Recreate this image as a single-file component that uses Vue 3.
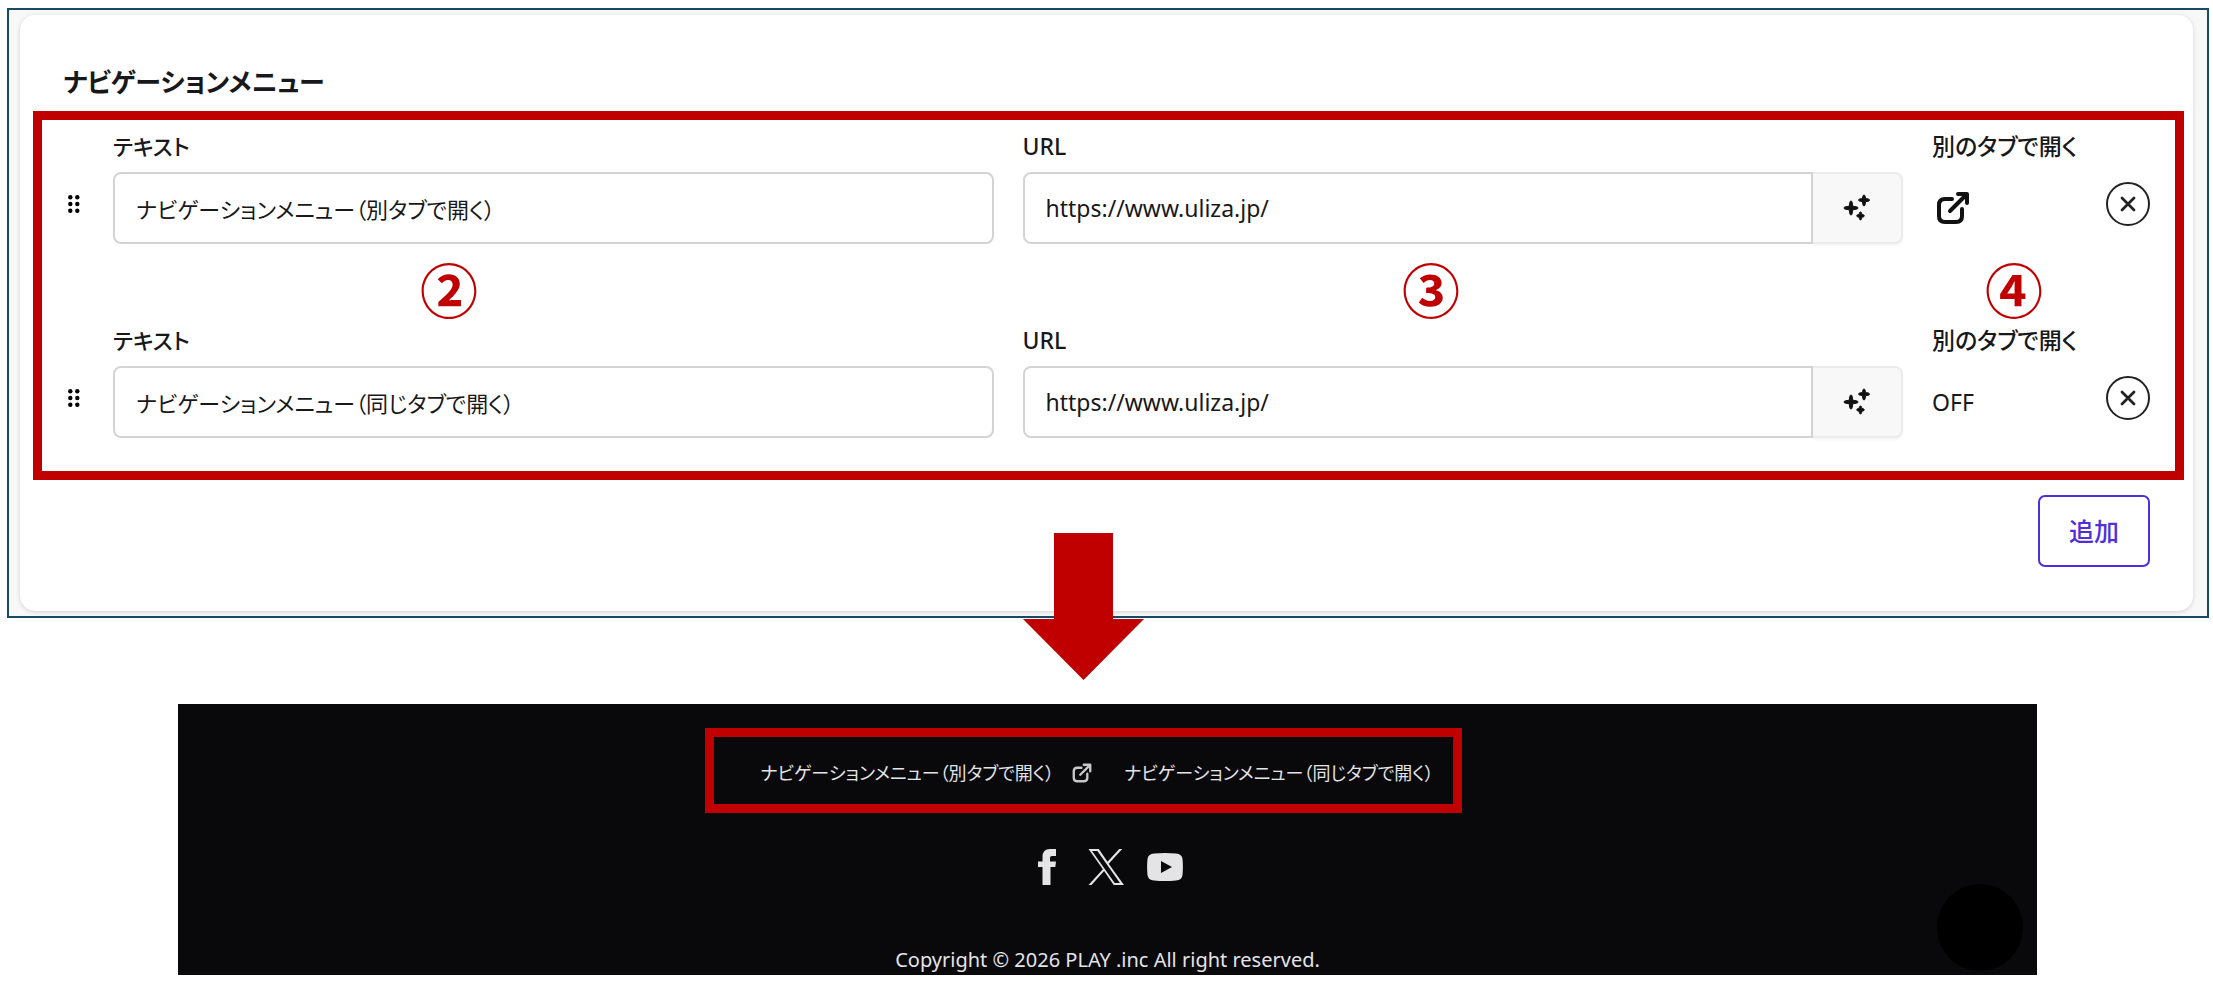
<script setup>
import { reactive } from 'vue'

const rows = reactive([
  { text: 'ナビゲーションメニュー（別タブで開く）', url: 'https://www.uliza.jp/', newTab: true },
  { text: 'ナビゲーションメニュー（同じタブで開く）', url: 'https://www.uliza.jp/', newTab: false },
])
</script>

<template>
  <main class="page">
    <div class="frame">
      <section class="card">
        <h2 class="title">ナビゲーションメニュー</h2>
        <div class="highlight rows">
          <div v-for="(row, i) in rows" :key="i" class="row">
            <svg class="handle" viewBox="0 0 12 18" aria-hidden="true">
              <circle v-for="n in 6" :key="n" :cx="n % 2 ? 2.3 : 9.300" :cy="2.300 + Math.floor((n - 1) / 2) * 6.700" r="2.200" />
            </svg>
            <div class="field">
              <label :for="'text' + i">テキスト</label>
              <input :id="'text' + i" v-model="row.text" class="input" type="text" />
            </div>
            <div class="field">
              <label :for="'url' + i" class="latin">URL</label>
              <div class="group">
                <input :id="'url' + i" v-model="row.url" class="input latin" type="text" />
                <button class="spark" type="button" aria-label="URL">
                  <svg viewBox="0 0 26 26" aria-hidden="true">
                    <path d="M7 6q1 0 1.200 1.500l.6 3.700 3.700.6q1.500.2 1.500 1.200t-1.500 1.200l-3.700.6-.6 3.700Q8 20 7 20t-1.200-1.500l-.6-3.700-3.700-.6Q0 14 0 13t1.500-1.200l3.700-.6.6-3.700Q6 6 7 6z" />
                    <path d="M20 0q1 0 1.200 1.500l.3 2 2.500.4q1.500.2 1.500 1.200t-1.500 1.200l-2.500.4-.3 2.300Q21 11 20 11t-1.200-2l-.3-2.300-2-.4Q14.500 6 14.500 5.100t1.500-1.200l2.500-.4.3-2Q19 0 20 0z" />
                    <path d="M16.500 17q.9 0 1.100 1.200l.2 1.200 1.400.3q1.100.3 1.100 1.100t-1.100 1.100l-1.400.3-.2 1.500q-.2 1.200-1.100 1.200t-1.100-1.200l-.2-1.500-1.400-.3q-1.100-.3-1.100-1.100t1.100-1.100l1.400-.3.2-1.200q.2-1.200 1.100-1.200z" />
                  </svg>
                </button>
              </div>
            </div>
            <div class="field">
              <span class="label latin">別のタブで開く</span>
              <div class="state">
                <svg v-if="row.newTab" class="external" viewBox="0 0 34 34" aria-hidden="true">
                  <path d="M16 8H9Q3 8 3 14v11q0 6 6 6h11q6 0 6-6v-7" />
                  <path d="M14 20 30 4M22 3h9v9" />
                </svg>
                <template v-else>OFF</template>
              </div>
            </div>
            <button class="remove" type="button" aria-label="×">
              <svg viewBox="0 0 44 44" aria-hidden="true">
                <circle cx="22" cy="22" r="21" />
                <path d="m16 16 12 12m0-12L16 28" stroke-width="2.800" />
              </svg>
            </button>
          </div>
          <span class="mark mark-text">②</span>
          <span class="mark mark-url">③</span>
          <span class="mark mark-tab">④</span>
        </div>
        <div class="actions">
          <button class="add" type="button">追加</button>
        </div>
      </section>
      <svg class="arrow" viewBox="0 0 121 147" aria-hidden="true">
        <path d="M31 0h59v86h31l-60.500 61L0 86h31z" />
      </svg>
    </div>

    <footer class="footer">
      <nav class="highlight nav">
        <a href="#">{{ rows[0].text }}
          <svg viewBox="0 0 34 34" aria-hidden="true">
            <path d="M16 8H9Q3 8 3 14v11q0 6 6 6h11q6 0 6-6v-7" />
            <path d="M14 20 30 4M20 3h11v11" />
          </svg>
        </a>
        <a href="#">{{ rows[1].text }}</a>
      </nav>
      <div class="social">
        <a href="#" aria-label="Facebook">
          <svg viewBox="0 0 36 36"><path d="M13.500 36V18H9v-5.500h4.500V8q0-8 7.500-8h6v7h-4q-2 0-2 2v3.500h6l-.7 5.500H21.500v18z" /></svg>
        </a>
        <a href="#" aria-label="X">
          <svg viewBox="0 0 36 36"><path fill-rule="evenodd" d="M.5 0h10.300l8.700 12.700L31.200 0h3L20.700 14.700 36 36H25.700l-9.600-14L3.500 36h-3l14.400-15.800zM4 2l22.700 32h5.200L9.400 2z" /></svg>
        </a>
        <a href="#" aria-label="YouTube">
          <svg viewBox="0 0 36 36"><path fill-rule="evenodd" d="M7 4.500q11-1 22 0 6 .5 6.500 5.500.8 8 0 16-.5 5-6.500 5.500-11 1-22 0-6-.5-6.500-5.500-.8-8 0-16Q1 5 7 4.500zM14 12v12l11-6z" /></svg>
        </a>
      </div>
      <p class="copyright">Copyright © 2026 PLAY .inc All right reserved.</p>
      <span class="bubble"></span>
    </footer>
  </main>
</template>

<style>
body {
  background: #fff;
}
</style>

<style scoped>
.page {
  box-sizing: border-box;
  padding: 8px 4px 18px 7px;
  font-family: "Noto Sans", "Noto Sans CJK JP", sans-serif;
  font-feature-settings: "palt";
  font-size: 22px;
  line-height: 36px;
  color: #18181b;
}
.page *,
.page *::before {
  box-sizing: border-box;
}
.frame {
  position: relative;
  padding: 5px 14px 5px 11px;
  border: 2px solid #154b64;
  background: #f8f8f8;
}
.card {
  padding: 49px 9px 44px 13px;
  border-radius: 15px;
  background: #fff;
  box-shadow: 0 1px 4px rgba(0, 0, 0, 0.16);
}
.title {
  margin: 0 0 11px;
  padding-left: 30px;
  font-size: 26px;
  font-weight: 600;
  line-height: 36px;
}
.highlight {
  border: 9px solid #c00000;
}
.rows {
  position: relative;
  display: grid;
  gap: 78px;
  padding: 8px 25px 33px 26px;
}
.row {
  display: grid;
  grid-template-columns: 16px 1fr 1fr 145px 44px;
  gap: 29px;
  align-items: end;
}
.handle {
  width: 12px;
  height: 18px;
  margin-bottom: 31px;
}
.field {
  display: grid;
  gap: 8px;
  min-width: 0;
}
label,
.label {
  font-weight: 500;
  white-space: nowrap;
}
.input {
  width: 100%;
  min-width: 0;
  height: 72px;
  padding: 0 21px;
  border: 2px solid #d4d4d4;
  border-radius: 8px;
  background: #fff;
  color: inherit;
  font: inherit;
  font-feature-settings: inherit;
}
.group {
  display: flex;
}
.group .input {
  flex: 1;
  border-radius: 8px 0 0 8px;
}
.latin,
.state {
  font-size: 23px;
}
.spark {
  display: grid;
  place-items: center;
  width: 90px;
  height: 72px;
  padding: 0;
  border: 2px solid #ebebeb;
  border-left: 0;
  border-radius: 0 8px 8px 0;
  background: #f8f8f8;
  box-shadow: 0 2px 3px rgba(0, 0, 0, 0.04);
}
.spark svg {
  width: 26px;
  height: 26px;
  overflow: visible;
  fill: #111;
  stroke: #111;
  stroke-width: 1;
}
.state {
  display: flex;
  align-items: center;
  height: 72px;
}
.external {
  width: 34px;
  height: 34px;
  margin-left: 4px;
  fill: none;
  stroke: #111;
  stroke-width: 4;
  stroke-linecap: round;
  stroke-linejoin: round;
}
.remove {
  width: 44px;
  height: 44px;
  margin-bottom: 18px;
  padding: 0;
  border: 0;
  background: none;
}
.remove svg {
  display: block;
  fill: none;
  stroke: #222;
  stroke-width: 2;
  stroke-linecap: round;
}
.mark {
  position: absolute;
  top: 138px;
  width: 60px;
  color: #c00000;
  font-family: "Noto Sans CJK JP", sans-serif;
  font-size: 58px;
  font-weight: 700;
  line-height: 60px;
  text-align: center;
}
.mark-text {
  left: 377px;
}
.mark-url {
  left: 1359px;
}
.mark-tab {
  right: 131px;
}
.actions {
  display: flex;
  justify-content: flex-end;
  padding: 15px 34px 0 0;
}
.add {
  width: 112px;
  height: 72px;
  padding: 0;
  border: 2px solid #4f2fdc;
  border-radius: 7px;
  background: #fff;
  color: #4f2fdc;
  font: inherit;
  font-size: 25px;
  font-weight: 500;
}
.arrow {
  position: absolute;
  left: 1014px;
  bottom: -64px;
  width: 121px;
  height: 147px;
  fill: #c00000;
}
.footer {
  position: relative;
  display: flex;
  flex-direction: column;
  align-items: center;
  margin: 86px 172px 0 171px;
  padding-top: 24px;
  background: #09090b;
  color: #e4e4e7;
}
.nav {
  display: flex;
  gap: 32px;
  height: 85px;
  margin-right: 48px;
  padding: 5px 19px 0 46px;
  font-size: 18px;
  line-height: 62px;
}
a {
  color: inherit;
  text-decoration: none;
}
.nav a {
  display: flex;
  align-items: center;
  gap: 18px;
  white-space: nowrap;
}
.nav svg {
  width: 20px;
  height: 20px;
  fill: none;
  stroke: #c8c8ca;
  stroke-width: 4;
  stroke-linecap: round;
  stroke-linejoin: round;
}
.social {
  display: flex;
  gap: 23px;
  margin: 36px 4px 60px 0;
}
.social svg {
  display: block;
  width: 36px;
  height: 36px;
  fill: #e4e4e7;
}
.copyright {
  margin: 0;
  font-size: 20px;
  line-height: 30px;
}
.bubble {
  position: absolute;
  right: 14px;
  bottom: 4px;
  width: 86px;
  height: 87px;
  border-radius: 50%;
  background: #000;
}
</style>
